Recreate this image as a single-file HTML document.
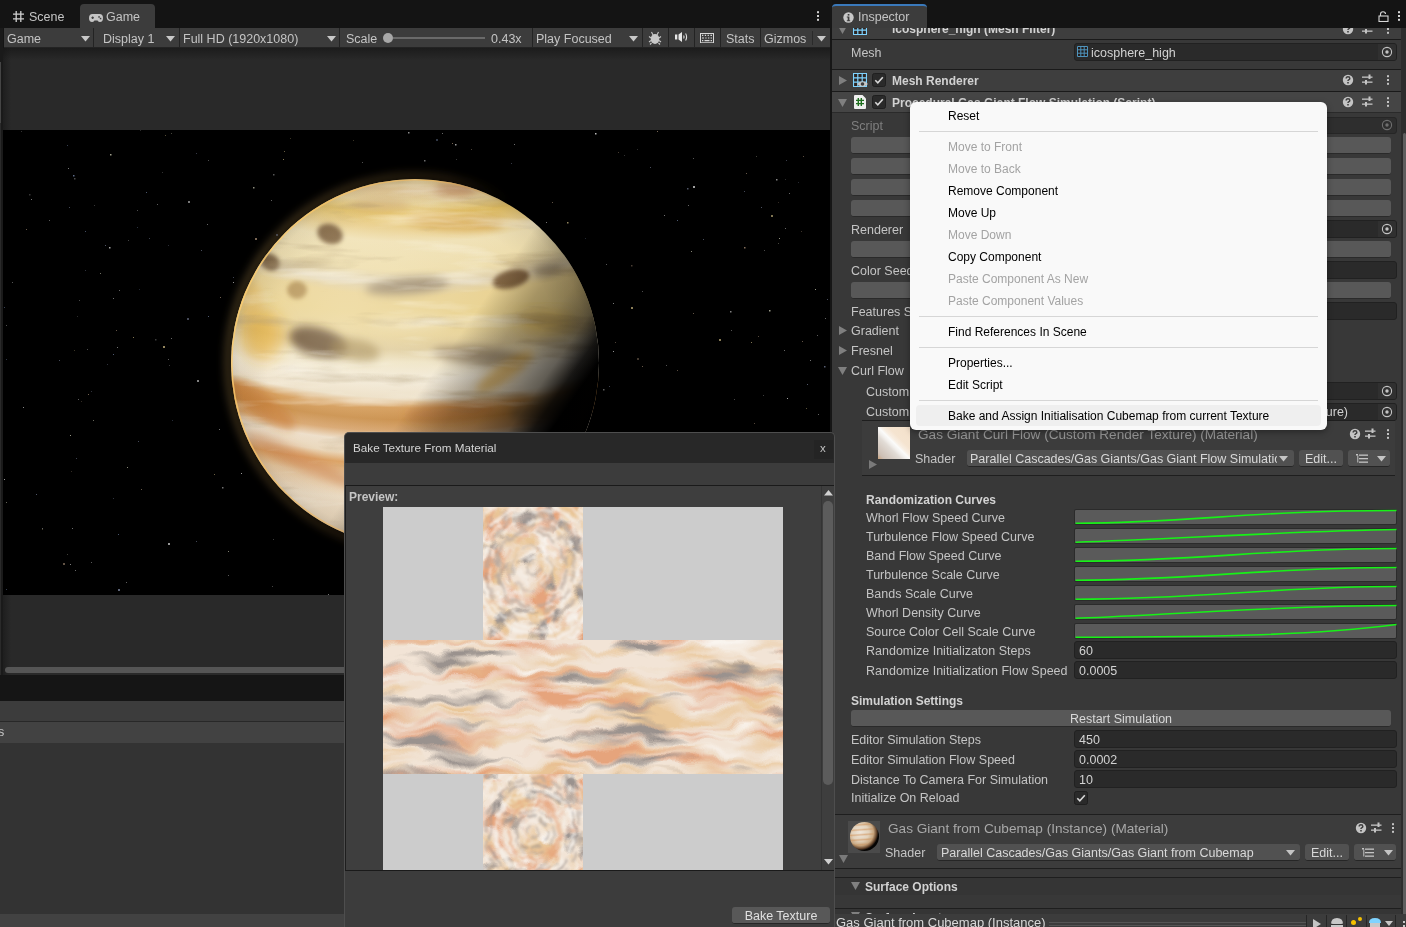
<!DOCTYPE html>
<html><head><meta charset="utf-8">
<style>
*{margin:0;padding:0;box-sizing:border-box}
html,body{width:1406px;height:927px;overflow:hidden;background:#141414}
body{position:relative;font-family:"Liberation Sans",sans-serif;font-size:12.5px;color:#c4c4c4}
.a{position:absolute}
.t{position:absolute;white-space:nowrap;line-height:16px;height:16px}
.b{font-weight:bold}
.sep{position:absolute;width:1px;background:#262626}
.tri-d{position:absolute;width:0;height:0;border-left:4px solid transparent;border-right:4px solid transparent;border-top:5px solid #c4c4c4}
.tri-r{position:absolute;width:0;height:0;border-top:4px solid transparent;border-bottom:4px solid transparent;border-left:6px solid #808080}
.tri-dd{position:absolute;width:0;height:0;border-left:4px solid transparent;border-right:4px solid transparent;border-top:7px solid #808080}
.fld{position:absolute;background:#2a2a2a;border:1px solid #212121;border-radius:3px}
.btn{position:absolute;background:#585858;border-radius:3px;box-shadow:0 1px 0 #242424}
.crv{position:absolute;background:#555555;border:1px solid #2a2a2a;border-radius:2px;overflow:hidden}
.menu{position:absolute;background:#f9f9f9;border-radius:6px;box-shadow:0 2px 6px rgba(0,0,0,.35)}
.mi{position:absolute;left:38px;line-height:16px;white-space:nowrap;font-size:12px;color:#000}
.mi.dis{color:#a3a3a3}
.msep{position:absolute;left:9px;right:9px;height:1px;background:#d6d6d6}
</style></head><body>
<div id="root" style="position:absolute;left:0;top:0;width:1406px;height:927px;overflow:hidden;will-change:transform">

<!-- ===== top tab strip ===== -->
<div class="a" style="left:0;top:0;width:832px;height:28px;background:#141414"></div>
<div class="a" style="left:80px;top:4px;width:75px;height:24px;background:#3c3c3c;border-radius:4px 4px 0 0"></div>
<div class="t" style="left:29px;top:9px;color:#c4c4c4">Scene</div>
<div class="t" style="left:106px;top:9px;color:#c4c4c4">Game</div>

<!-- ===== game toolbar ===== -->
<div class="a" style="left:0;top:28px;width:3px;height:647px;background:#1a1a1a"></div>
<div class="a" style="left:0;top:62px;width:1px;height:61px;background:#454545"></div>
<div class="a" style="left:0;top:123px;width:1px;height:552px;background:#2a2a2a"></div>
<div class="a" style="left:4px;top:28px;width:826px;height:20px;background:#3c3c3c"></div>
<!--GAME-->
<svg class="a" style="left:13px;top:11px" width="11" height="11" viewBox="0 0 11 11"><path d="M3.2 0V11 M7.8 0V11 M0 3.2H11 M0 7.8H11" stroke="#d0d0d0" stroke-width="1.3"/></svg>
<svg class="a" style="left:89px;top:14px" width="14" height="8" viewBox="0 0 14 8"><path d="M3.5 0H10.5Q14 0 14 4Q14 8 11 8Q9.5 8 8.5 6.5H5.5Q4.5 8 3 8Q0 8 0 4Q0 0 3.5 0Z" fill="#c4c4c4"/><path d="M2.3 3.8H5 M3.65 2.5V5.1" stroke="#3c3c3c" stroke-width="1.1"/><rect x="9.3" y="2.2" width="1.5" height="1.5" fill="#3c3c3c"/><rect x="10.8" y="3.8" width="1.5" height="1.5" fill="#3c3c3c"/></svg>
<svg class="a" style="left:816px;top:10px" width="4" height="12" viewBox="0 0 4 12"><rect x="1" y="1.2" width="2" height="2" fill="#d0d0d0"/><rect x="1" y="5" width="2" height="2" fill="#d0d0d0"/><rect x="1" y="8.8" width="2" height="2" fill="#d0d0d0"/></svg>
<div class="a" style="left:93px;top:28px;width:1px;height:20px;background:#232323;"></div>
<div class="a" style="left:179px;top:28px;width:1px;height:20px;background:#232323;"></div>
<div class="a" style="left:339px;top:28px;width:1px;height:20px;background:#232323;"></div>
<div class="a" style="left:532px;top:28px;width:1px;height:20px;background:#232323;"></div>
<div class="a" style="left:642px;top:28px;width:1px;height:20px;background:#232323;"></div>
<div class="a" style="left:668px;top:28px;width:1px;height:20px;background:#232323;"></div>
<div class="a" style="left:694px;top:28px;width:1px;height:20px;background:#232323;"></div>
<div class="a" style="left:720px;top:28px;width:1px;height:20px;background:#232323;"></div>
<div class="a" style="left:760px;top:28px;width:1px;height:20px;background:#232323;"></div>
<div class="a" style="left:812px;top:31px;width:1px;height:14px;background:#2a2a2a;"></div>
<div class="a" style="left:4px;top:47px;width:826px;height:1px;background:#232323;"></div>
<div class="t" style="left:7px;top:31px;color:#c4c4c4;">Game</div>
<svg class="a" style="left:81px;top:36px" width="9" height="6" viewBox="0 0 9 6"><path d="M0 0 L9 0 L4.5 5.5Z" fill="#c8c8c8"/></svg>
<div class="t" style="left:103px;top:31px;color:#c4c4c4;">Display 1</div>
<svg class="a" style="left:166px;top:36px" width="9" height="6" viewBox="0 0 9 6"><path d="M0 0 L9 0 L4.5 5.5Z" fill="#c8c8c8"/></svg>
<div class="t" style="left:183px;top:31px;color:#c4c4c4;">Full HD (1920x1080)</div>
<svg class="a" style="left:327px;top:36px" width="9" height="6" viewBox="0 0 9 6"><path d="M0 0 L9 0 L4.5 5.5Z" fill="#c8c8c8"/></svg>
<div class="t" style="left:346px;top:31px;color:#c4c4c4;">Scale</div>
<div class="a" style="left:393px;top:37px;width:92px;height:1.5px;background:#6a6a6a;"></div>
<div class="a" style="left:383px;top:33px;width:10px;height:10px;border-radius:50%;background:#a8a8a8"></div>
<div class="t" style="left:491px;top:31px;color:#c4c4c4;">0.43x</div>
<div class="t" style="left:536px;top:31px;color:#c4c4c4;">Play Focused</div>
<svg class="a" style="left:629px;top:36px" width="9" height="6" viewBox="0 0 9 6"><path d="M0 0 L9 0 L4.5 5.5Z" fill="#c8c8c8"/></svg>
<svg class="a" style="left:648px;top:31px" width="14" height="14" viewBox="0 0 14 14"><ellipse cx="7" cy="8" rx="4.3" ry="5" fill="#c8c8c8"/><path d="M3.5 1L5 4 M10.5 1L9 4 M1 5.5L3 7 M13 5.5L11 7 M1 11L3 9.5 M13 11L11 9.5 M2 13.5L3.5 12 M12 13.5L10.5 12" stroke="#c8c8c8" stroke-width="1.1"/></svg>
<svg class="a" style="left:675px;top:32px" width="13" height="10" viewBox="0 0 13 10"><rect x="0" y="2.5" width="2.3" height="5" fill="#e8e8e8"/><path d="M3.5 2.5L7 0V10L3.5 7.5Z" fill="#e8e8e8"/><path d="M8.6 3.5Q9.6 5 8.6 6.5" stroke="#e0e0e0" stroke-width="1.1" fill="none"/><path d="M10.6 1.5Q12.6 5 10.6 8.5" stroke="#e0e0e0" stroke-width="1.1" fill="none"/></svg>
<svg class="a" style="left:700px;top:33px" width="14" height="10" viewBox="0 0 14 10"><rect x="0.5" y="0.5" width="13" height="9.3" fill="none" stroke="#d8d8d8" stroke-width="1"/><path d="M2 2.3h1.3M4.8 2.3h1.3M7.6 2.3h1.3M10.4 2.3h1.6M2 5h2M5.3 5h1.3M8 5h1.3M10.6 5h1.4M2 7.6h1.3M4.5 7.6h5M10.6 7.6h1.4" stroke="#d8d8d8" stroke-width="1.2"/></svg>
<div class="t" style="left:726px;top:31px;color:#c4c4c4;">Stats</div>
<div class="t" style="left:764px;top:31px;color:#c4c4c4;">Gizmos</div>
<svg class="a" style="left:817px;top:36px" width="9" height="6" viewBox="0 0 9 6"><path d="M0 0 L9 0 L4.5 5.5Z" fill="#c8c8c8"/></svg>
<!--/GAME-->

<!-- ===== game view ===== -->
<div class="a" style="left:3px;top:48px;width:827px;height:627px;background:#292929"></div>
<div class="a" style="left:3px;top:48px;width:827px;height:12px;background:linear-gradient(#1c1c1c,rgba(40,40,40,0))"></div>
<div class="a" style="left:3px;top:48px;width:8px;height:627px;background:linear-gradient(90deg,rgba(20,20,20,.5),rgba(40,40,40,0))"></div>
<div class="a" style="left:3px;top:130px;width:827px;height:465px;background:#000;overflow:hidden" id="sky">
<!--PLANET-->
<svg class="a" style="left:0;top:0" width="827" height="465" viewBox="0 0 827 465">
<defs>
<clipPath id="pc"><circle cx="412" cy="233" r="184"/></clipPath>
<filter id="bl4" x="-50%" y="-50%" width="200%" height="200%"><feGaussianBlur stdDeviation="4"/></filter>
<filter id="bl8" x="-50%" y="-50%" width="200%" height="200%"><feGaussianBlur stdDeviation="8"/></filter>
<filter id="bl2" x="-50%" y="-50%" width="200%" height="200%"><feGaussianBlur stdDeviation="2"/></filter>
<filter id="glow" x="-20%" y="-20%" width="140%" height="140%"><feGaussianBlur stdDeviation="3"/></filter>
<radialGradient id="bands" gradientUnits="userSpaceOnUse" cx="411" cy="-431" r="900">
<stop offset="0" stop-color="#e6d2a4"/>
<stop offset="0.5344" stop-color="#e4cc90"/>
<stop offset="0.5456" stop-color="#e2c490"/>
<stop offset="0.5589" stop-color="#ead49c"/>
<stop offset="0.5722" stop-color="#e6c264"/>
<stop offset="0.5878" stop-color="#e8cc88"/>
<stop offset="0.6033" stop-color="#efe0b4"/>
<stop offset="0.6344" stop-color="#eddcaa"/>
<stop offset="0.6500" stop-color="#dccdac"/>
<stop offset="0.6633" stop-color="#e8d090"/>
<stop offset="0.6844" stop-color="#e8d08c"/>
<stop offset="0.7067" stop-color="#e6d094"/>
<stop offset="0.7233" stop-color="#dcc898"/>
<stop offset="0.7367" stop-color="#ede2c4"/>
<stop offset="0.7567" stop-color="#f2eadb"/>
<stop offset="0.7767" stop-color="#eadcc4"/>
<stop offset="0.7878" stop-color="#d0924c"/>
<stop offset="0.8011" stop-color="#c4843c"/>
<stop offset="0.8144" stop-color="#d49e66"/>
<stop offset="0.8256" stop-color="#ecdcc8"/>
<stop offset="0.8400" stop-color="#e8d4b8"/>
<stop offset="0.8511" stop-color="#d99c5c"/>
<stop offset="0.8656" stop-color="#e4c49c"/>
<stop offset="0.8900" stop-color="#ecdcc4"/>
<stop offset="0.9567" stop-color="#e6d0b0"/>
</radialGradient>
<radialGradient id="shade" gradientUnits="userSpaceOnUse" cx="412" cy="233" r="184"><stop offset="0" stop-color="#000" stop-opacity="0"/><stop offset="0.8" stop-color="#000" stop-opacity="0"/><stop offset="0.95" stop-color="#100800" stop-opacity="0.06"/><stop offset="1" stop-color="#000" stop-opacity="0.12"/></radialGradient>
<linearGradient id="shadeE" gradientUnits="userSpaceOnUse" x1="412" y1="233" x2="543" y2="324.8"><stop offset="0" stop-color="#000" stop-opacity="0"/><stop offset="0.125" stop-color="#000" stop-opacity="0"/><stop offset="0.375" stop-color="#0a0600" stop-opacity="0.3"/><stop offset="0.531" stop-color="#0a0600" stop-opacity="0.4"/><stop offset="0.719" stop-color="#050300" stop-opacity="0.6"/><stop offset="0.844" stop-color="#000" stop-opacity="0.9"/><stop offset="0.9375" stop-color="#000" stop-opacity="1"/></linearGradient>
<radialGradient id="hl" gradientUnits="userSpaceOnUse" cx="342" cy="193" r="184"><stop offset="0" stop-color="#fff8e0" stop-opacity="0.35"/><stop offset="1" stop-color="#fff8e0" stop-opacity="0"/></radialGradient>
<linearGradient id="rimg" gradientUnits="userSpaceOnUse" x1="228" y1="177.8" x2="596" y2="288.2"><stop offset="0" stop-color="#ffcf70" stop-opacity="0.85"/><stop offset="0.45" stop-color="#f0b050" stop-opacity="0.5"/><stop offset="0.62" stop-color="#a07030" stop-opacity="0"/></linearGradient>
<filter id="ptex" x="0" y="0" width="1" height="1"><feTurbulence type="fractalNoise" baseFrequency="0.008 0.05" numOctaves="4" seed="3" result="n"/><feColorMatrix in="n" type="matrix" values="0 0 0 0 0.35  0 0 0 0 0.25  0 0 0 0 0.12  3 0 0 0 -1.75" result="dk"/><feColorMatrix in="n" type="matrix" values="0 0 0 0 1  0 0 0 0 0.97  0 0 0 0 0.9  0 -3 0 0 1.25" result="lt"/><feMerge><feMergeNode in="dk"/><feMergeNode in="lt"/></feMerge></filter>
</defs>
<circle cx="412" cy="233" r="187" fill="none" stroke="url(#rimg)" stroke-width="6" stroke-opacity="0.35" filter="url(#bl4)"/>
<g clip-path="url(#pc)">
<rect x="228" y="49" width="368" height="368" fill="url(#bands)"/>
<ellipse cx="327" cy="104" rx="13" ry="10" fill="#6a4a2a" fill-opacity="0.9" filter="url(#bl2)" transform="rotate(20 327 104)"/>
<ellipse cx="267" cy="132" rx="10" ry="8" fill="#5f4224" fill-opacity="0.9" filter="url(#bl2)" transform="rotate(30 267 132)"/>
<ellipse cx="294" cy="160" rx="10" ry="9" fill="#9a7030" fill-opacity="0.75" filter="url(#bl2)" transform="rotate(0 294 160)"/>
<ellipse cx="404" cy="156" rx="42" ry="8" fill="#7c6a52" fill-opacity="0.7" filter="url(#bl4)" transform="rotate(-5 404 156)"/>
<ellipse cx="508" cy="149" rx="19" ry="9" fill="#6a4a2a" fill-opacity="0.85" filter="url(#bl2)" transform="rotate(-15 508 149)"/>
<ellipse cx="545" cy="140" rx="16" ry="6" fill="#7a6a52" fill-opacity="0.6" filter="url(#bl4)" transform="rotate(-10 545 140)"/>
<ellipse cx="315" cy="212" rx="30" ry="14" fill="#4e3018" fill-opacity="0.9" filter="url(#bl4)" transform="rotate(15 315 212)"/>
<ellipse cx="259" cy="205" rx="22" ry="26" fill="#e0a020" fill-opacity="0.7" filter="url(#bl8)" transform="rotate(0 259 205)"/>
<ellipse cx="352" cy="220" rx="25" ry="11" fill="#907030" fill-opacity="0.6" filter="url(#bl4)" transform="rotate(10 352 220)"/>
<ellipse cx="477" cy="226" rx="48" ry="9" fill="#7a6448" fill-opacity="0.65" filter="url(#bl4)" transform="rotate(5 477 226)"/>
<ellipse cx="545" cy="192" rx="30" ry="10" fill="#d8a830" fill-opacity="0.55" filter="url(#bl8)" transform="rotate(0 545 192)"/>
<ellipse cx="452" cy="92" rx="48" ry="8" fill="#d09838" fill-opacity="0.7" filter="url(#bl4)" transform="rotate(3 452 92)"/>
<ellipse cx="452" cy="60" rx="22" ry="7" fill="#b8805a" fill-opacity="0.6" filter="url(#bl4)" transform="rotate(0 452 60)"/>
<ellipse cx="377" cy="75" rx="30" ry="6" fill="#c89860" fill-opacity="0.45" filter="url(#bl4)" transform="rotate(0 377 75)"/>
<ellipse cx="537" cy="248" rx="20" ry="20" fill="#e8e2d2" fill-opacity="0.6" filter="url(#bl4)" transform="rotate(0 537 248)"/>
<ellipse cx="502" cy="242" rx="35" ry="9" fill="#d8a030" fill-opacity="0.6" filter="url(#bl4)" transform="rotate(-35 502 242)"/>
<ellipse cx="259" cy="275" rx="40" ry="12" fill="#c06a20" fill-opacity="0.6" filter="url(#bl4)" transform="rotate(35 259 275)"/>
<ellipse cx="297" cy="330" rx="60" ry="9" fill="#c87840" fill-opacity="0.5" filter="url(#bl4)" transform="rotate(25 297 330)"/>
<ellipse cx="407" cy="192" rx="40" ry="8" fill="#f4ecd8" fill-opacity="0.35" filter="url(#bl4)" transform="rotate(0 407 192)"/>
<ellipse cx="447" cy="282" rx="45" ry="9" fill="#b86a28" fill-opacity="0.5" filter="url(#bl4)" transform="rotate(-5 447 282)"/>
<ellipse cx="537" cy="280" rx="30" ry="10" fill="#6a5a40" fill-opacity="0.5" filter="url(#bl4)" transform="rotate(-10 537 280)"/>
<ellipse cx="247" cy="170" rx="12" ry="20" fill="#e8b040" fill-opacity="0.5" filter="url(#bl4)" transform="rotate(0 247 170)"/>
<rect x="228" y="49" width="368" height="368" fill="#000" filter="url(#ptex)" opacity="0.55"/>
<rect x="228" y="49" width="368" height="368" fill="url(#hl)"/>
<rect x="228" y="49" width="368" height="368" fill="url(#shadeE)"/>
<rect x="228" y="49" width="368" height="368" fill="url(#shade)"/>
<circle cx="412" cy="233" r="183.5" fill="none" stroke="url(#rimg)" stroke-width="2.2"/>
</g>
<rect x="268" y="70" width="1" height="1" fill="#8a8a8a" fill-opacity="0.67"/>
<rect x="78" y="271" width="1" height="1" fill="#a08870" fill-opacity="0.32"/>
<rect x="359" y="32" width="1" height="1" fill="#a0a0a0" fill-opacity="0.49"/>
<rect x="684" y="58" width="1.5" height="1.5" fill="#707890" fill-opacity="0.70"/>
<rect x="784" y="268" width="1" height="1" fill="#d8d8d8" fill-opacity="0.74"/>
<rect x="39" y="399" width="1" height="1" fill="#b0a070" fill-opacity="0.36"/>
<rect x="97" y="143" width="1" height="1" fill="#c8c8b0" fill-opacity="0.56"/>
<rect x="453" y="29" width="1" height="1" fill="#8a8a8a" fill-opacity="0.39"/>
<rect x="657" y="325" width="1" height="1" fill="#707890" fill-opacity="0.56"/>
<rect x="603" y="134" width="1" height="1" fill="#a0a0a0" fill-opacity="0.53"/>
<rect x="136" y="159" width="1" height="1" fill="#6a7a9a" fill-opacity="0.32"/>
<rect x="781" y="220" width="1" height="1" fill="#a0a0a0" fill-opacity="0.63"/>
<rect x="593" y="412" width="1" height="1" fill="#909090" fill-opacity="0.72"/>
<rect x="238" y="343" width="1" height="1" fill="#d8d8d8" fill-opacity="0.71"/>
<rect x="113" y="200" width="1" height="1" fill="#a08870" fill-opacity="0.62"/>
<rect x="816" y="317" width="1" height="1" fill="#d8d8d8" fill-opacity="0.37"/>
<rect x="146" y="108" width="1" height="1" fill="#707890" fill-opacity="0.52"/>
<rect x="3" y="195" width="1" height="1" fill="#909090" fill-opacity="0.55"/>
<rect x="788" y="321" width="1" height="1" fill="#a08870" fill-opacity="0.59"/>
<rect x="612" y="212" width="1" height="1" fill="#a08870" fill-opacity="0.48"/>
<rect x="814" y="205" width="1" height="1" fill="#a0a0a0" fill-opacity="0.57"/>
<rect x="85" y="264" width="1" height="1" fill="#a08870" fill-opacity="0.73"/>
<rect x="508" y="33" width="1" height="1" fill="#707890" fill-opacity="0.47"/>
<rect x="525" y="444" width="1" height="1" fill="#909090" fill-opacity="0.36"/>
<rect x="702" y="462" width="1" height="1" fill="#6a7a9a" fill-opacity="0.52"/>
<rect x="71" y="48" width="1.5" height="1.5" fill="#909090" fill-opacity="0.50"/>
<rect x="685" y="75" width="1" height="1" fill="#8a8a8a" fill-opacity="0.73"/>
<rect x="449" y="13" width="1" height="1" fill="#a08870" fill-opacity="0.74"/>
<rect x="714" y="324" width="1" height="1" fill="#b0a070" fill-opacity="0.47"/>
<rect x="138" y="359" width="1" height="1" fill="#a08870" fill-opacity="0.65"/>
<rect x="273" y="104" width="2" height="2" fill="#707890" fill-opacity="0.48"/>
<rect x="165" y="229" width="1" height="1" fill="#8a8a8a" fill-opacity="0.66"/>
<rect x="669" y="336" width="1" height="1" fill="#909090" fill-opacity="0.34"/>
<rect x="84" y="219" width="1" height="1" fill="#909090" fill-opacity="0.52"/>
<rect x="815" y="284" width="1" height="1" fill="#8a8a8a" fill-opacity="0.71"/>
<rect x="690" y="56" width="2" height="2" fill="#d8d8d8" fill-opacity="0.74"/>
<rect x="165" y="413" width="2" height="2" fill="#d8d8d8" fill-opacity="0.70"/>
<rect x="72" y="440" width="1" height="1" fill="#d8d8d8" fill-opacity="0.48"/>
<rect x="783" y="337" width="1" height="1" fill="#c8c8b0" fill-opacity="0.31"/>
<rect x="775" y="72" width="1" height="1" fill="#a08870" fill-opacity="0.31"/>
<rect x="661" y="338" width="1" height="1" fill="#a0a0a0" fill-opacity="0.64"/>
<rect x="115" y="459" width="2" height="2" fill="#707890" fill-opacity="0.83"/>
<rect x="23" y="99" width="1" height="1" fill="#a08870" fill-opacity="0.64"/>
<rect x="690" y="28" width="1" height="1" fill="#909090" fill-opacity="0.60"/>
<rect x="674" y="240" width="1" height="1" fill="#a08870" fill-opacity="0.54"/>
<rect x="433" y="9" width="2" height="2" fill="#6a7a9a" fill-opacity="0.45"/>
<rect x="3" y="372" width="1" height="1" fill="#c8c8b0" fill-opacity="0.51"/>
<rect x="600" y="259" width="1.5" height="1.5" fill="#909090" fill-opacity="0.64"/>
<rect x="88" y="261" width="1" height="1" fill="#707890" fill-opacity="0.42"/>
<rect x="639" y="236" width="1" height="1" fill="#a08870" fill-opacity="0.64"/>
<rect x="755" y="206" width="1" height="1" fill="#a08870" fill-opacity="0.53"/>
<rect x="779" y="325" width="1" height="1" fill="#b0a070" fill-opacity="0.70"/>
<rect x="168" y="208" width="1" height="1" fill="#d8d8d8" fill-opacity="0.48"/>
<rect x="250" y="57" width="1.5" height="1.5" fill="#c8c8b0" fill-opacity="0.70"/>
<rect x="114" y="217" width="1" height="1" fill="#a0a0a0" fill-opacity="0.70"/>
<rect x="135" y="311" width="1" height="1" fill="#707890" fill-opacity="0.62"/>
<rect x="822" y="188" width="1" height="1" fill="#d8d8d8" fill-opacity="0.46"/>
<rect x="76" y="170" width="1" height="1" fill="#909090" fill-opacity="0.51"/>
<rect x="795" y="52" width="1" height="1" fill="#707890" fill-opacity="0.34"/>
<rect x="225" y="421" width="1" height="1" fill="#c8c8b0" fill-opacity="0.64"/>
<rect x="678" y="395" width="1" height="1" fill="#b0a070" fill-opacity="0.37"/>
<rect x="760" y="265" width="1" height="1" fill="#909090" fill-opacity="0.43"/>
<rect x="661" y="85" width="1" height="1" fill="#a0a0a0" fill-opacity="0.72"/>
<rect x="69" y="398" width="1" height="1" fill="#a0a0a0" fill-opacity="0.69"/>
<rect x="457" y="431" width="1" height="1" fill="#b0a070" fill-opacity="0.36"/>
<rect x="91" y="75" width="1" height="1" fill="#8a8a8a" fill-opacity="0.39"/>
<rect x="628" y="135" width="1.5" height="1.5" fill="#a08870" fill-opacity="0.45"/>
<rect x="287" y="8" width="1" height="1" fill="#b0a070" fill-opacity="0.31"/>
<rect x="606" y="256" width="1" height="1" fill="#707890" fill-opacity="0.51"/>
<rect x="773" y="49" width="1.5" height="1.5" fill="#d8d8d8" fill-opacity="0.62"/>
<rect x="690" y="183" width="1" height="1" fill="#a08870" fill-opacity="0.61"/>
<rect x="812" y="159" width="1" height="1" fill="#c8c8b0" fill-opacity="0.75"/>
<rect x="812" y="389" width="1" height="1" fill="#8a8a8a" fill-opacity="0.58"/>
<rect x="728" y="200" width="1" height="1" fill="#8a8a8a" fill-opacity="0.60"/>
<rect x="803" y="278" width="1" height="1" fill="#b0a070" fill-opacity="0.51"/>
<rect x="130" y="207" width="1" height="1" fill="#b0a070" fill-opacity="0.73"/>
<rect x="804" y="254" width="1" height="1" fill="#707890" fill-opacity="0.73"/>
<rect x="1" y="177" width="1" height="1" fill="#6a7a9a" fill-opacity="0.53"/>
<rect x="166" y="235" width="1" height="1" fill="#8a8a8a" fill-opacity="0.42"/>
<rect x="74" y="186" width="1" height="1" fill="#8a8a8a" fill-opacity="0.31"/>
<rect x="252" y="108" width="2" height="2" fill="#a08870" fill-opacity="0.76"/>
<rect x="727" y="181" width="1.5" height="1.5" fill="#909090" fill-opacity="0.89"/>
<rect x="124" y="337" width="1" height="1" fill="#c8c8b0" fill-opacity="0.67"/>
<rect x="418" y="423" width="1" height="1" fill="#a08870" fill-opacity="0.68"/>
<rect x="665" y="384" width="1" height="1" fill="#707890" fill-opacity="0.31"/>
<rect x="110" y="168" width="1" height="1" fill="#a0a0a0" fill-opacity="0.68"/>
<rect x="405" y="2" width="1.5" height="1.5" fill="#a0a0a0" fill-opacity="0.86"/>
<rect x="743" y="43" width="1" height="1" fill="#a08870" fill-opacity="0.64"/>
<rect x="700" y="109" width="1" height="1" fill="#707890" fill-opacity="0.63"/>
<rect x="807" y="230" width="1" height="1" fill="#d8d8d8" fill-opacity="0.52"/>
<rect x="565" y="357" width="1" height="1" fill="#707890" fill-opacity="0.57"/>
<rect x="110" y="224" width="1" height="1" fill="#6a7a9a" fill-opacity="0.74"/>
<rect x="82" y="101" width="1" height="1" fill="#6a7a9a" fill-opacity="0.62"/>
<rect x="634" y="462" width="1" height="1" fill="#a08870" fill-opacity="0.44"/>
<rect x="71" y="220" width="1" height="1" fill="#b0a070" fill-opacity="0.33"/>
<rect x="419" y="462" width="1" height="1" fill="#b0a070" fill-opacity="0.39"/>
<rect x="782" y="98" width="1" height="1" fill="#a0a0a0" fill-opacity="0.64"/>
<rect x="217" y="167" width="1" height="1" fill="#a08870" fill-opacity="0.70"/>
<rect x="582" y="108" width="1" height="1" fill="#6a7a9a" fill-opacity="0.31"/>
<rect x="3" y="229" width="1" height="1" fill="#6a7a9a" fill-opacity="0.44"/>
<rect x="116" y="160" width="1" height="1" fill="#909090" fill-opacity="0.68"/>
<rect x="1" y="349" width="1" height="1" fill="#d8d8d8" fill-opacity="0.72"/>
<rect x="162" y="5" width="1" height="1" fill="#b0a070" fill-opacity="0.47"/>
<rect x="325" y="464" width="1" height="1" fill="#a0a0a0" fill-opacity="0.72"/>
<rect x="625" y="397" width="1" height="1" fill="#b0a070" fill-opacity="0.32"/>
<rect x="123" y="452" width="1" height="1" fill="#d8d8d8" fill-opacity="0.44"/>
<rect x="639" y="365" width="1" height="1" fill="#d8d8d8" fill-opacity="0.67"/>
<rect x="522" y="425" width="1" height="1" fill="#a08870" fill-opacity="0.39"/>
<rect x="67" y="434" width="1" height="1" fill="#d8d8d8" fill-opacity="0.58"/>
<rect x="115" y="404" width="1" height="1" fill="#6a7a9a" fill-opacity="0.71"/>
<rect x="211" y="344" width="1" height="1" fill="#b0a070" fill-opacity="0.60"/>
<rect x="134" y="97" width="1" height="1" fill="#6a7a9a" fill-opacity="0.40"/>
<rect x="749" y="463" width="1" height="1" fill="#6a7a9a" fill-opacity="0.36"/>
<rect x="159" y="42" width="1" height="1" fill="#909090" fill-opacity="0.34"/>
<rect x="198" y="120" width="1" height="1" fill="#707890" fill-opacity="0.64"/>
<rect x="280" y="29" width="1" height="1" fill="#b0a070" fill-opacity="0.74"/>
<rect x="104" y="234" width="1" height="1" fill="#707890" fill-opacity="0.42"/>
<rect x="205" y="186" width="1" height="1" fill="#6a7a9a" fill-opacity="0.73"/>
<rect x="702" y="406" width="1" height="1" fill="#8a8a8a" fill-opacity="0.31"/>
<rect x="587" y="416" width="1" height="1" fill="#6a7a9a" fill-opacity="0.52"/>
<rect x="60" y="433" width="2" height="2" fill="#a08870" fill-opacity="0.61"/>
<rect x="185" y="71" width="2" height="2" fill="#a0a0a0" fill-opacity="0.75"/>
<rect x="33" y="364" width="1" height="1" fill="#707890" fill-opacity="0.71"/>
<rect x="106" y="117" width="1.5" height="1.5" fill="#d8d8d8" fill-opacity="0.77"/>
<rect x="82" y="140" width="1" height="1" fill="#707890" fill-opacity="0.42"/>
<rect x="654" y="1" width="1" height="1" fill="#a08870" fill-opacity="0.75"/>
<rect x="230" y="147" width="1" height="1" fill="#707890" fill-opacity="0.54"/>
<rect x="452" y="14" width="1.5" height="1.5" fill="#d8d8d8" fill-opacity="0.71"/>
<rect x="46" y="90" width="1" height="1" fill="#d8d8d8" fill-opacity="0.42"/>
<rect x="552" y="430" width="1" height="1" fill="#707890" fill-opacity="0.32"/>
<rect x="564" y="92" width="1.5" height="1.5" fill="#b0a070" fill-opacity="0.81"/>
<rect x="56" y="230" width="1" height="1" fill="#707890" fill-opacity="0.64"/>
<rect x="160" y="216" width="2" height="2" fill="#b0a070" fill-opacity="0.84"/>
<rect x="90" y="290" width="1" height="1" fill="#c8c8b0" fill-opacity="0.52"/>
<rect x="753" y="26" width="1" height="1" fill="#c8c8b0" fill-opacity="0.32"/>
<rect x="20" y="277" width="1" height="1" fill="#d8d8d8" fill-opacity="0.62"/>
<rect x="152" y="209" width="1.5" height="1.5" fill="#909090" fill-opacity="0.41"/>
<rect x="66" y="77" width="1" height="1" fill="#707890" fill-opacity="0.59"/>
<rect x="694" y="458" width="1" height="1" fill="#6a7a9a" fill-opacity="0.35"/>
<rect x="65" y="38" width="1" height="1" fill="#d8d8d8" fill-opacity="0.55"/>
<rect x="628" y="177" width="2" height="2" fill="#b0a070" fill-opacity="0.79"/>
<rect x="73" y="328" width="1" height="1" fill="#707890" fill-opacity="0.54"/>
<rect x="610" y="221" width="1" height="1" fill="#d8d8d8" fill-opacity="0.67"/>
<rect x="634" y="19" width="1" height="1" fill="#8a8a8a" fill-opacity="0.33"/>
<rect x="761" y="120" width="1" height="1" fill="#a0a0a0" fill-opacity="0.45"/>
<rect x="225" y="445" width="1" height="1" fill="#8a8a8a" fill-opacity="0.64"/>
<rect x="570" y="430" width="1" height="1" fill="#b0a070" fill-opacity="0.62"/>
<rect x="783" y="30" width="1" height="1" fill="#707890" fill-opacity="0.51"/>
<rect x="791" y="444" width="2" height="2" fill="#d8d8d8" fill-opacity="0.49"/>
<rect x="768" y="85" width="2" height="2" fill="#b0a070" fill-opacity="0.73"/>
<rect x="125" y="110" width="1" height="1" fill="#909090" fill-opacity="0.46"/>
<rect x="647" y="37" width="1" height="1" fill="#707890" fill-opacity="0.64"/>
<rect x="205" y="30" width="1" height="1" fill="#8a8a8a" fill-opacity="0.55"/>
<rect x="269" y="456" width="1" height="1" fill="#a0a0a0" fill-opacity="0.42"/>
<rect x="70" y="45" width="1.5" height="1.5" fill="#6a7a9a" fill-opacity="0.88"/>
<rect x="143" y="62" width="1" height="1" fill="#6a7a9a" fill-opacity="0.70"/>
<rect x="194" y="250" width="2" height="2" fill="#a0a0a0" fill-opacity="0.81"/>
<rect x="165" y="115" width="1" height="1" fill="#707890" fill-opacity="0.37"/>
<rect x="731" y="269" width="1" height="1" fill="#909090" fill-opacity="0.48"/>
<rect x="821" y="236" width="1.5" height="1.5" fill="#707890" fill-opacity="0.79"/>
<rect x="540" y="461" width="1" height="1" fill="#a0a0a0" fill-opacity="0.51"/>
<rect x="677" y="391" width="1" height="1" fill="#909090" fill-opacity="0.69"/>
<rect x="193" y="23" width="1" height="1" fill="#707890" fill-opacity="0.47"/>
<rect x="716" y="209" width="2" height="2" fill="#b0a070" fill-opacity="0.78"/>
<rect x="782" y="49" width="1" height="1" fill="#909090" fill-opacity="0.32"/>
<rect x="281" y="21" width="1" height="1" fill="#b0a070" fill-opacity="0.57"/>
<rect x="9" y="152" width="1" height="1" fill="#909090" fill-opacity="0.58"/>
<rect x="64" y="15" width="1" height="1" fill="#6a7a9a" fill-opacity="0.52"/>
<rect x="549" y="72" width="1" height="1" fill="#a08870" fill-opacity="0.59"/>
<rect x="817" y="311" width="1" height="1" fill="#d8d8d8" fill-opacity="0.44"/>
<rect x="824" y="169" width="1" height="1" fill="#707890" fill-opacity="0.63"/>
<rect x="168" y="3" width="1" height="1" fill="#c8c8b0" fill-opacity="0.35"/>
<rect x="75" y="269" width="1" height="1" fill="#909090" fill-opacity="0.65"/>
<rect x="107" y="24" width="1.5" height="1.5" fill="#c8c8b0" fill-opacity="0.79"/>
<rect x="767" y="343" width="1" height="1" fill="#c8c8b0" fill-opacity="0.46"/>
<rect x="134" y="80" width="1" height="1" fill="#a0a0a0" fill-opacity="0.47"/>
<rect x="623" y="368" width="1" height="1" fill="#707890" fill-opacity="0.36"/>
<rect x="780" y="454" width="1" height="1" fill="#6a7a9a" fill-opacity="0.32"/>
<rect x="766" y="180" width="1.5" height="1.5" fill="#c8c8b0" fill-opacity="0.78"/>
<rect x="184" y="188" width="2" height="2" fill="#707890" fill-opacity="0.61"/>
<rect x="468" y="19" width="1" height="1" fill="#a08870" fill-opacity="0.47"/>
<rect x="102" y="115" width="1" height="1" fill="#707890" fill-opacity="0.70"/>
<rect x="697" y="313" width="1" height="1" fill="#909090" fill-opacity="0.48"/>
<rect x="643" y="302" width="1" height="1" fill="#b0a070" fill-opacity="0.41"/>
<rect x="3" y="459" width="1" height="1" fill="#6a7a9a" fill-opacity="0.50"/>
<rect x="692" y="377" width="1" height="1" fill="#d8d8d8" fill-opacity="0.33"/>
<rect x="663" y="235" width="1" height="1" fill="#8a8a8a" fill-opacity="0.59"/>
<rect x="68" y="341" width="1" height="1" fill="#a08870" fill-opacity="0.32"/>
<rect x="786" y="63" width="1" height="1" fill="#a0a0a0" fill-opacity="0.63"/>
<rect x="674" y="90" width="1" height="1" fill="#6a7a9a" fill-opacity="0.73"/>
<rect x="758" y="77" width="1" height="1" fill="#707890" fill-opacity="0.67"/>
<rect x="748" y="212" width="1" height="1" fill="#b0a070" fill-opacity="0.73"/>
<rect x="230" y="152" width="1" height="1" fill="#d8d8d8" fill-opacity="0.66"/>
<rect x="219" y="357" width="1.5" height="1.5" fill="#8a8a8a" fill-opacity="0.82"/>
<rect x="799" y="211" width="1" height="1" fill="#a08870" fill-opacity="0.61"/>
<rect x="741" y="117" width="1.5" height="1.5" fill="#a08870" fill-opacity="0.82"/>
<rect x="610" y="173" width="1" height="1" fill="#d8d8d8" fill-opacity="0.56"/>
<rect x="615" y="22" width="1" height="1" fill="#a08870" fill-opacity="0.44"/>
<rect x="799" y="405" width="1.5" height="1.5" fill="#909090" fill-opacity="0.35"/>
<rect x="28" y="69" width="1" height="1" fill="#d8d8d8" fill-opacity="0.53"/>
<rect x="741" y="61" width="1" height="1" fill="#707890" fill-opacity="0.59"/>
<rect x="18" y="1" width="1" height="1" fill="#909090" fill-opacity="0.35"/>
<rect x="169" y="290" width="1" height="1" fill="#6a7a9a" fill-opacity="0.36"/>
<rect x="775" y="113" width="1" height="1" fill="#c8c8b0" fill-opacity="0.34"/>
<rect x="528" y="405" width="1" height="1" fill="#b0a070" fill-opacity="0.67"/>
<rect x="800" y="26" width="1" height="1" fill="#a08870" fill-opacity="0.57"/>
<rect x="137" y="0" width="1" height="1" fill="#8a8a8a" fill-opacity="0.31"/>
<rect x="154" y="74" width="1" height="1" fill="#a0a0a0" fill-opacity="0.58"/>
<rect x="543" y="92" width="1" height="1" fill="#d8d8d8" fill-opacity="0.53"/>
<rect x="421" y="30" width="1.5" height="1.5" fill="#8a8a8a" fill-opacity="0.78"/>
<rect x="592" y="3" width="1.5" height="1.5" fill="#d8d8d8" fill-opacity="0.85"/>
<rect x="67" y="305" width="1" height="1" fill="#c8c8b0" fill-opacity="0.75"/>
<rect x="216" y="299" width="1" height="1" fill="#a0a0a0" fill-opacity="0.70"/>
<rect x="765" y="438" width="1.5" height="1.5" fill="#b0a070" fill-opacity="0.38"/>
<rect x="567" y="427" width="1" height="1" fill="#b0a070" fill-opacity="0.59"/>
<rect x="798" y="101" width="1" height="1" fill="#a08870" fill-opacity="0.38"/>
<rect x="748" y="391" width="1" height="1" fill="#707890" fill-opacity="0.64"/>
<rect x="270" y="409" width="1" height="1" fill="#909090" fill-opacity="0.41"/>
<rect x="751" y="293" width="1" height="1" fill="#a08870" fill-opacity="0.51"/>
<rect x="439" y="3" width="1" height="1" fill="#8a8a8a" fill-opacity="0.73"/>
<rect x="193" y="411" width="1" height="1" fill="#707890" fill-opacity="0.58"/>
<rect x="64" y="424" width="1" height="1" fill="#c8c8b0" fill-opacity="0.31"/>
<rect x="88" y="432" width="1" height="1" fill="#909090" fill-opacity="0.62"/>
<rect x="26" y="64" width="1.5" height="1.5" fill="#8a8a8a" fill-opacity="0.39"/>
<rect x="39" y="398" width="1" height="1" fill="#909090" fill-opacity="0.67"/>
<rect x="678" y="414" width="2" height="2" fill="#a0a0a0" fill-opacity="0.77"/>
<rect x="204" y="94" width="1" height="1" fill="#8a8a8a" fill-opacity="0.73"/>
<rect x="753" y="350" width="2" height="2" fill="#a0a0a0" fill-opacity="0.76"/>
<rect x="110" y="368" width="1" height="1" fill="#707890" fill-opacity="0.44"/>
<rect x="350" y="10" width="1" height="1" fill="#b0a070" fill-opacity="0.32"/>
<rect x="628" y="423" width="1" height="1" fill="#a08870" fill-opacity="0.68"/>
<rect x="511" y="14" width="1" height="1" fill="#d8d8d8" fill-opacity="0.50"/>
<rect x="639" y="161" width="1" height="1" fill="#8a8a8a" fill-opacity="0.55"/>
<rect x="591" y="385" width="1" height="1" fill="#b0a070" fill-opacity="0.50"/>
<rect x="621" y="25" width="1" height="1" fill="#909090" fill-opacity="0.34"/>
<rect x="575" y="384" width="1" height="1" fill="#6a7a9a" fill-opacity="0.46"/>
<rect x="688" y="121" width="1" height="1" fill="#c8c8b0" fill-opacity="0.67"/>
<rect x="776" y="108" width="1" height="1" fill="#c8c8b0" fill-opacity="0.72"/>
<rect x="634" y="228" width="2" height="2" fill="#a08870" fill-opacity="0.41"/>
<rect x="270" y="44" width="1.5" height="1.5" fill="#d8d8d8" fill-opacity="0.40"/>
</svg>
<!--/PLANET-->
</div>
<div class="a" style="left:5px;top:667px;width:825px;height:6px;background:#555;border-radius:3px"></div>

<!-- ===== lower-left panel ===== -->
<div class="a" style="left:0;top:675px;width:345px;height:26px;background:#151515"></div>
<div class="a" style="left:0;top:701px;width:345px;height:20px;background:#3c3c3c"></div>
<div class="a" style="left:0;top:721px;width:345px;height:1px;background:#282828"></div>
<div class="a" style="left:0;top:722px;width:345px;height:21px;background:#424242"></div>
<div class="t" style="left:-9px;top:724px;color:#c4c4c4">es</div>
<div class="a" style="left:0;top:743px;width:345px;height:171px;background:#333333"></div>
<div class="a" style="left:0;top:914px;width:345px;height:13px;background:#424242"></div>

<!-- ===== inspector ===== -->
<div class="a" style="left:830px;top:0;width:2px;height:927px;background:#161616"></div>
<div class="a" style="left:832px;top:28px;width:574px;height:899px;background:#3c3c3c" id="insp"></div>
<!--INSP1-->
<div class="a" style="left:832px;top:28px;width:569px;height:899px;background:#383838;"></div>
<div class="a" style="left:1401px;top:28px;width:5px;height:899px;background:#2d2d2d;"></div>
<div class="a" style="left:1403px;top:133px;width:3px;height:794px;background:#5e5e5e;border-radius:2px"></div>
<div class="a" style="left:832px;top:18px;width:569px;height:21px;background:#3e3e3e;"></div>
<div class="a" style="left:832px;top:39px;width:569px;height:1px;background:#1a1a1a;"></div>
<svg class="a" style="left:838px;top:26px" width="9" height="8" viewBox="0 0 9 8"><path d="M0 0 L9 0 L4.5 8Z" fill="#7f7f7f"/></svg>
<svg class="a" style="left:853px;top:21px" width="14" height="14" viewBox="0 0 14 14"><rect x="0.5" y="0.5" width="13" height="13" fill="#2b2421"/><path d="M0.5 0.5H13.5V13.5H0.5Z M0.5 4.8H13.5 M0.5 9.2H13.5 M4.8 0.5V13.5 M9.2 0.5V13.5" stroke="#7fd3ff" stroke-width="1.2" fill="none"/></svg>
<div class="t" style="left:892px;top:21px;color:#d2d2d2;font-weight:bold;font-size:12px">icosphere_high (Mesh Filter)</div>
<svg class="a" style="left:1342px;top:23px" width="12" height="12" viewBox="0 0 12 12"><circle cx="6" cy="6" r="5.2" fill="#c4c4c4"/><path d="M4.2 4.6 Q4.2 2.8 6 2.8 Q7.8 2.8 7.8 4.4 Q7.8 5.4 6.6 5.9 Q6 6.2 6 7" stroke="#3e3e3e" stroke-width="1.5" fill="none"/><rect x="5.2" y="8" width="1.6" height="1.5" fill="#3e3e3e"/></svg>
<svg class="a" style="left:1362px;top:23px" width="12" height="12" viewBox="0 0 12 12"><rect x="0" y="2.5" width="10.5" height="1.3" fill="#c4c4c4"/><rect x="6.5" y="0.5" width="2" height="4.5" fill="#c4c4c4"/><rect x="0" y="7.5" width="10.5" height="1.3" fill="#c4c4c4"/><rect x="3" y="6" width="2" height="4.5" fill="#c4c4c4"/></svg>
<svg class="a" style="left:1386px;top:23px" width="4" height="12" viewBox="0 0 4 12"><rect x="1" y="1.2" width="2" height="2" fill="#c4c4c4"/><rect x="1" y="5" width="2" height="2" fill="#c4c4c4"/><rect x="1" y="8.8" width="2" height="2" fill="#c4c4c4"/></svg>
<div class="t" style="left:851px;top:45px;color:#c4c4c4;">Mesh</div>
<div class="a" style="left:1074px;top:43px;width:323px;height:18px;background:#2a2a2a;border:1px solid #212121;border-radius:3px"></div>
<div class="a" style="left:1378px;top:44px;width:18px;height:16px;background:#303030;border-radius:0 2px 2px 0"></div>
<svg class="a" style="left:1077px;top:46px" width="11" height="11" viewBox="0 0 11 11"><rect x="0" y="0" width="11" height="11" fill="#231c1a"/><path d="M0.5 0.5H10.5V10.5H0.5Z M0.5 3.8H10.5 M0.5 7.2H10.5 M3.8 0.5V10.5 M7.2 0.5V10.5" stroke="#4f94bd" stroke-width="1" fill="none"/></svg>
<div class="t" style="left:1091px;top:45px;color:#d2d2d2;">icosphere_high</div>
<svg class="a" style="left:1381px;top:46px" width="12" height="12" viewBox="0 0 12 12"><circle cx="6" cy="6" r="4.6" stroke="#c4c4c4" stroke-width="1.1" fill="none"/><circle cx="6" cy="6" r="1.7" fill="#c4c4c4"/></svg>
<div class="a" style="left:832px;top:69px;width:569px;height:1px;background:#1a1a1a;"></div>
<div class="a" style="left:832px;top:70px;width:569px;height:21px;background:#3e3e3e;"></div>
<div class="a" style="left:832px;top:91px;width:569px;height:1px;background:#1a1a1a;"></div>
<svg class="a" style="left:839px;top:76px" width="8" height="9" viewBox="0 0 8 9"><path d="M0 0 L8 4.5 L0 9Z" fill="#7f7f7f"/></svg>
<svg class="a" style="left:853px;top:73px" width="14" height="14" viewBox="0 0 14 14"><rect x="0.5" y="0.5" width="13" height="13" fill="#2b2421"/><path d="M0.5 0.5H13.5V13.5H0.5Z M0.5 4.8H13.5 M0.5 9.2H13.5 M4.8 0.5V13.5 M9.2 0.5V13.5" stroke="#7fd3ff" stroke-width="1.2" fill="none"/></svg>
<svg class="a" style="left:857px;top:80px" width="11" height="8" viewBox="0 0 11 8"><path d="M0 4 Q5.5 -1.5 11 4 Q5.5 9.5 0 4Z" fill="#c8c8c8"/><circle cx="5.5" cy="4" r="1.8" fill="#3e3e3e"/></svg>
<svg class="a" style="left:872px;top:73px" width="14" height="14" viewBox="0 0 14 14"><rect x="0.5" y="0.5" width="13" height="13" rx="2" fill="#2a2a2a" stroke="#1f1f1f"/><path d="M3.3 7.3 L5.8 9.8 L10.8 4.3" stroke="#d8d8d8" stroke-width="1.6" fill="none"/></svg>
<div class="t" style="left:892px;top:73px;color:#d2d2d2;font-weight:bold;font-size:12px">Mesh Renderer</div>
<svg class="a" style="left:1342px;top:74px" width="12" height="12" viewBox="0 0 12 12"><circle cx="6" cy="6" r="5.2" fill="#c4c4c4"/><path d="M4.2 4.6 Q4.2 2.8 6 2.8 Q7.8 2.8 7.8 4.4 Q7.8 5.4 6.6 5.9 Q6 6.2 6 7" stroke="#3e3e3e" stroke-width="1.5" fill="none"/><rect x="5.2" y="8" width="1.6" height="1.5" fill="#3e3e3e"/></svg>
<svg class="a" style="left:1362px;top:74px" width="12" height="12" viewBox="0 0 12 12"><rect x="0" y="2.5" width="10.5" height="1.3" fill="#c4c4c4"/><rect x="6.5" y="0.5" width="2" height="4.5" fill="#c4c4c4"/><rect x="0" y="7.5" width="10.5" height="1.3" fill="#c4c4c4"/><rect x="3" y="6" width="2" height="4.5" fill="#c4c4c4"/></svg>
<svg class="a" style="left:1386px;top:74px" width="4" height="12" viewBox="0 0 4 12"><rect x="1" y="1.2" width="2" height="2" fill="#c4c4c4"/><rect x="1" y="5" width="2" height="2" fill="#c4c4c4"/><rect x="1" y="8.8" width="2" height="2" fill="#c4c4c4"/></svg>
<div class="a" style="left:832px;top:92px;width:569px;height:20px;background:#454545;"></div>
<div class="a" style="left:832px;top:112px;width:569px;height:1px;background:#2a2a2a;"></div>
<svg class="a" style="left:838px;top:99px" width="9" height="8" viewBox="0 0 9 8"><path d="M0 0 L9 0 L4.5 8Z" fill="#7f7f7f"/></svg>
<svg class="a" style="left:854px;top:95px" width="12" height="14" viewBox="0 0 12 14"><path d="M1 0H8.5L12 3.5V13Q12 14 11 14H1Q0 14 0 13V1Q0 0 1 0Z" fill="#efefef"/><path d="M4.3 3V11 M7.3 3V11 M2 5.4H10 M2 8.6H10" stroke="#1f6f1f" stroke-width="1.4"/></svg>
<svg class="a" style="left:872px;top:95px" width="14" height="14" viewBox="0 0 14 14"><rect x="0.5" y="0.5" width="13" height="13" rx="2" fill="#2a2a2a" stroke="#1f1f1f"/><path d="M3.3 7.3 L5.8 9.8 L10.8 4.3" stroke="#d8d8d8" stroke-width="1.6" fill="none"/></svg>
<div class="t" style="left:892px;top:95px;color:#d2d2d2;font-weight:bold;font-size:12px">Procedural Gas Giant Flow Simulation (Script)</div>
<svg class="a" style="left:1342px;top:96px" width="12" height="12" viewBox="0 0 12 12"><circle cx="6" cy="6" r="5.2" fill="#c4c4c4"/><path d="M4.2 4.6 Q4.2 2.8 6 2.8 Q7.8 2.8 7.8 4.4 Q7.8 5.4 6.6 5.9 Q6 6.2 6 7" stroke="#3e3e3e" stroke-width="1.5" fill="none"/><rect x="5.2" y="8" width="1.6" height="1.5" fill="#3e3e3e"/></svg>
<svg class="a" style="left:1362px;top:96px" width="12" height="12" viewBox="0 0 12 12"><rect x="0" y="2.5" width="10.5" height="1.3" fill="#c4c4c4"/><rect x="6.5" y="0.5" width="2" height="4.5" fill="#c4c4c4"/><rect x="0" y="7.5" width="10.5" height="1.3" fill="#c4c4c4"/><rect x="3" y="6" width="2" height="4.5" fill="#c4c4c4"/></svg>
<svg class="a" style="left:1386px;top:96px" width="4" height="12" viewBox="0 0 4 12"><rect x="1" y="1.2" width="2" height="2" fill="#c4c4c4"/><rect x="1" y="5" width="2" height="2" fill="#c4c4c4"/><rect x="1" y="8.8" width="2" height="2" fill="#c4c4c4"/></svg>
<div class="t" style="left:851px;top:118px;color:#7f7f7f;">Script</div>
<div class="a" style="left:1074px;top:117px;width:323px;height:17px;background:#2e2e2e;border:1px solid #262626;border-radius:3px"></div>
<svg class="a" style="left:1381px;top:119px" width="12" height="12" viewBox="0 0 12 12"><circle cx="6" cy="6" r="4.6" stroke="#6f6f6f" stroke-width="1.1" fill="none"/><circle cx="6" cy="6" r="1.7" fill="#6f6f6f"/></svg>
<div class="a" style="left:851px;top:137px;width:540px;height:17px;background:#585858;border-radius:3px;border-bottom:1px solid #2a2a2a"></div>
<div class="a" style="left:851px;top:158px;width:540px;height:17px;background:#585858;border-radius:3px;border-bottom:1px solid #2a2a2a"></div>
<div class="a" style="left:851px;top:179px;width:540px;height:17px;background:#585858;border-radius:3px;border-bottom:1px solid #2a2a2a"></div>
<div class="a" style="left:851px;top:200px;width:540px;height:17px;background:#585858;border-radius:3px;border-bottom:1px solid #2a2a2a"></div>
<div class="t" style="left:851px;top:222px;color:#c4c4c4;">Renderer</div>
<div class="a" style="left:1074px;top:220px;width:323px;height:18px;background:#2a2a2a;border:1px solid #212121;border-radius:3px"></div>
<div class="a" style="left:1378px;top:221px;width:18px;height:16px;background:#303030;border-radius:0 2px 2px 0"></div>
<svg class="a" style="left:1381px;top:223px" width="12" height="12" viewBox="0 0 12 12"><circle cx="6" cy="6" r="4.6" stroke="#c4c4c4" stroke-width="1.1" fill="none"/><circle cx="6" cy="6" r="1.7" fill="#c4c4c4"/></svg>
<div class="a" style="left:851px;top:241px;width:540px;height:17px;background:#585858;border-radius:3px;border-bottom:1px solid #2a2a2a"></div>
<div class="t" style="left:851px;top:263px;color:#c4c4c4;">Color Seed</div>
<div class="a" style="left:1074px;top:261px;width:323px;height:18px;background:#2a2a2a;border:1px solid #212121;border-radius:3px"></div>
<div class="a" style="left:851px;top:282px;width:540px;height:17px;background:#585858;border-radius:3px;border-bottom:1px solid #2a2a2a"></div>
<div class="t" style="left:851px;top:304px;color:#c4c4c4;">Features Scale</div>
<div class="a" style="left:1074px;top:302px;width:323px;height:18px;background:#2a2a2a;border:1px solid #212121;border-radius:3px"></div>
<svg class="a" style="left:839px;top:326px" width="8" height="9" viewBox="0 0 8 9"><path d="M0 0 L8 4.5 L0 9Z" fill="#7f7f7f"/></svg>
<div class="t" style="left:851px;top:323px;color:#c4c4c4;">Gradient</div>
<svg class="a" style="left:839px;top:346px" width="8" height="9" viewBox="0 0 8 9"><path d="M0 0 L8 4.5 L0 9Z" fill="#7f7f7f"/></svg>
<div class="t" style="left:851px;top:343px;color:#c4c4c4;">Fresnel</div>
<svg class="a" style="left:838px;top:367px" width="9" height="8" viewBox="0 0 9 8"><path d="M0 0 L9 0 L4.5 8Z" fill="#7f7f7f"/></svg>
<div class="t" style="left:851px;top:363px;color:#c4c4c4;">Curl Flow</div>
<div class="t" style="left:866px;top:384px;color:#c4c4c4;">Custom Render Texture</div>
<div class="a" style="left:1074px;top:382px;width:323px;height:18px;background:#2a2a2a;border:1px solid #212121;border-radius:3px"></div>
<div class="a" style="left:1378px;top:383px;width:18px;height:16px;background:#303030;border-radius:0 2px 2px 0"></div>
<svg class="a" style="left:1381px;top:385px" width="12" height="12" viewBox="0 0 12 12"><circle cx="6" cy="6" r="4.6" stroke="#c4c4c4" stroke-width="1.1" fill="none"/><circle cx="6" cy="6" r="1.7" fill="#c4c4c4"/></svg>
<div class="t" style="left:866px;top:404px;color:#c4c4c4;">Custom Render Texture</div>
<div class="a" style="left:1074px;top:403px;width:323px;height:18px;background:#2a2a2a;border:1px solid #212121;border-radius:3px"></div>
<div class="a" style="left:1378px;top:404px;width:18px;height:16px;background:#303030;border-radius:0 2px 2px 0"></div>
<div class="t" style="right:58px;top:404px;color:#d2d2d2;">Gas Giant Curl Flow (Custom Render Texture)</div>
<svg class="a" style="left:1381px;top:406px" width="12" height="12" viewBox="0 0 12 12"><circle cx="6" cy="6" r="4.6" stroke="#c4c4c4" stroke-width="1.1" fill="none"/><circle cx="6" cy="6" r="1.7" fill="#c4c4c4"/></svg>
<!--/INSP1-->
<!--INSP2-->
<div class="a" style="left:862px;top:420px;width:533px;height:1px;background:#1e1e1e;"></div>
<div class="a" style="left:862px;top:421px;width:533px;height:54px;background:#3c3c3c;"></div>
<div class="a" style="left:862px;top:475px;width:533px;height:1px;background:#1e1e1e;"></div>
<div class="a" style="left:878px;top:427px;width:32px;height:32px;background:linear-gradient(45deg,#c9a27c 0%,#cdbfb4 10%,#d8cfc7 25%,#e2dcd6 36%,#f3f1ee 44%,#fbfbfa 50%,#f8eee2 56%,#f5e4d0 66%,#f3e0ca 100%)"></div>
<svg class="a" style="left:869px;top:460px" width="8" height="9" viewBox="0 0 8 9"><path d="M0 0 L8 4.5 L0 9Z" fill="#7a7a7a"/></svg>
<div class="t" style="left:918px;top:426px;color:#959595;font-size:13.6px;line-height:18px;height:18px">Gas Giant Curl Flow (Custom Render Texture) (Material)</div>
<svg class="a" style="left:1349px;top:428px" width="12" height="12" viewBox="0 0 12 12"><circle cx="6" cy="6" r="5.2" fill="#c4c4c4"/><path d="M4.2 4.6 Q4.2 2.8 6 2.8 Q7.8 2.8 7.8 4.4 Q7.8 5.4 6.6 5.9 Q6 6.2 6 7" stroke="#3e3e3e" stroke-width="1.5" fill="none"/><rect x="5.2" y="8" width="1.6" height="1.5" fill="#3e3e3e"/></svg>
<svg class="a" style="left:1365px;top:428px" width="12" height="12" viewBox="0 0 12 12"><rect x="0" y="2.5" width="10.5" height="1.3" fill="#c4c4c4"/><rect x="6.5" y="0.5" width="2" height="4.5" fill="#c4c4c4"/><rect x="0" y="7.5" width="10.5" height="1.3" fill="#c4c4c4"/><rect x="3" y="6" width="2" height="4.5" fill="#c4c4c4"/></svg>
<svg class="a" style="left:1386px;top:428px" width="4" height="12" viewBox="0 0 4 12"><rect x="1" y="1.2" width="2" height="2" fill="#c4c4c4"/><rect x="1" y="5" width="2" height="2" fill="#c4c4c4"/><rect x="1" y="8.8" width="2" height="2" fill="#c4c4c4"/></svg>
<div class="t" style="left:915px;top:451px;color:#c4c4c4;">Shader</div>
<div class="a" style="left:967px;top:450px;width:327px;height:17px;background:#515151;border-radius:3px;border-bottom:1px solid #262626"></div>
<div class="t" style="left:970px;top:451px;width:307px;overflow:hidden;color:#d8d8d8">Parallel Cascades/Gas Giants/Gas Giant Flow Simulation</div>
<svg class="a" style="left:1279px;top:456px" width="9" height="6" viewBox="0 0 9 6"><path d="M0 0 L9 0 L4.5 5.5Z" fill="#c4c4c4"/></svg>
<div class="a" style="left:1299px;top:450px;width:44px;height:17px;background:#515151;border-radius:3px;border-bottom:1px solid #262626"></div>
<div class="t" style="left:1305px;top:451px;color:#d8d8d8;">Edit...</div>
<div class="a" style="left:1348px;top:450px;width:42px;height:17px;background:#515151;border-radius:3px;border-bottom:1px solid #262626"></div>
<svg class="a" style="left:1356px;top:454px" width="12" height="10" viewBox="0 0 12 10"><rect x="0" y="0" width="2" height="1.5" fill="#c4c4c4"/><rect x="3" y="0.5" width="9" height="1.3" fill="#c4c4c4"/><rect x="3" y="4" width="9" height="1.3" fill="#c4c4c4"/><rect x="3" y="7.5" width="9" height="1.3" fill="#c4c4c4"/><rect x="1.3" y="1.5" width="1" height="7" fill="#c4c4c4"/></svg>
<svg class="a" style="left:1377px;top:456px" width="9" height="6" viewBox="0 0 9 6"><path d="M0 0 L9 0 L4.5 5.5Z" fill="#c4c4c4"/></svg>
<div class="t" style="left:866px;top:492px;color:#d2d2d2;font-weight:bold;font-size:12px">Randomization Curves</div>
<div class="t" style="left:866px;top:510px;color:#c4c4c4;">Whorl Flow Speed Curve</div>
<svg class="a" style="left:1074px;top:509px" width="323" height="16" viewBox="0 0 323 16"><rect x="0.5" y="0.5" width="322" height="15" rx="1.5" fill="#5a5a5a" stroke="#2b2b2b"/><path d="M1 14.2 C120 14 170 1.5 322 1.5" stroke="#17f217" stroke-width="1.6" fill="none" transform="translate(0.5,0)"/></svg>
<div class="t" style="left:866px;top:529px;color:#c4c4c4;">Turbulence Flow Speed Curve</div>
<svg class="a" style="left:1074px;top:528px" width="323" height="16" viewBox="0 0 323 16"><rect x="0.5" y="0.5" width="322" height="15" rx="1.5" fill="#5a5a5a" stroke="#2b2b2b"/><path d="M1 14.2 C100 11 220 3 322 1.5" stroke="#17f217" stroke-width="1.6" fill="none" transform="translate(0.5,0)"/></svg>
<div class="t" style="left:866px;top:548px;color:#c4c4c4;">Band Flow Speed Curve</div>
<svg class="a" style="left:1074px;top:547px" width="323" height="16" viewBox="0 0 323 16"><rect x="0.5" y="0.5" width="322" height="15" rx="1.5" fill="#5a5a5a" stroke="#2b2b2b"/><path d="M1 14.2 C130 14 190 1.5 322 1.5" stroke="#17f217" stroke-width="1.6" fill="none" transform="translate(0.5,0)"/></svg>
<div class="t" style="left:866px;top:567px;color:#c4c4c4;">Turbulence Scale Curve</div>
<svg class="a" style="left:1074px;top:566px" width="323" height="16" viewBox="0 0 323 16"><rect x="0.5" y="0.5" width="322" height="15" rx="1.5" fill="#5a5a5a" stroke="#2b2b2b"/><path d="M1 14.2 C120 14 190 1.5 322 1.5" stroke="#17f217" stroke-width="1.6" fill="none" transform="translate(0.5,0)"/></svg>
<div class="t" style="left:866px;top:586px;color:#c4c4c4;">Bands Scale Curve</div>
<svg class="a" style="left:1074px;top:585px" width="323" height="16" viewBox="0 0 323 16"><rect x="0.5" y="0.5" width="322" height="15" rx="1.5" fill="#5a5a5a" stroke="#2b2b2b"/><path d="M1 14.2 C130 14 200 1.5 322 1.5" stroke="#17f217" stroke-width="1.6" fill="none" transform="translate(0.5,0)"/></svg>
<div class="t" style="left:866px;top:605px;color:#c4c4c4;">Whorl Density Curve</div>
<svg class="a" style="left:1074px;top:604px" width="323" height="16" viewBox="0 0 323 16"><rect x="0.5" y="0.5" width="322" height="15" rx="1.5" fill="#5a5a5a" stroke="#2b2b2b"/><path d="M1 14.2 C60 13 200 1.5 322 1.5" stroke="#17f217" stroke-width="1.6" fill="none" transform="translate(0.5,0)"/></svg>
<div class="t" style="left:866px;top:624px;color:#c4c4c4;">Source Color Cell Scale Curve</div>
<svg class="a" style="left:1074px;top:623px" width="323" height="16" viewBox="0 0 323 16"><rect x="0.5" y="0.5" width="322" height="15" rx="1.5" fill="#5a5a5a" stroke="#2b2b2b"/><path d="M1 14.2 C150 14 240 12 322 1.5" stroke="#17f217" stroke-width="1.6" fill="none" transform="translate(0.5,0)"/></svg>
<div class="t" style="left:866px;top:643px;color:#c4c4c4;">Randomize Initializaton Steps</div>
<div class="a" style="left:1074px;top:641px;width:323px;height:18px;background:#2a2a2a;border:1px solid #212121;border-radius:3px"></div>
<div class="t" style="left:1079px;top:643px;color:#d2d2d2;">60</div>
<div class="t" style="left:866px;top:663px;color:#c4c4c4;">Randomize Initialization Flow Speed</div>
<div class="a" style="left:1074px;top:661px;width:323px;height:18px;background:#2a2a2a;border:1px solid #212121;border-radius:3px"></div>
<div class="t" style="left:1079px;top:663px;color:#d2d2d2;">0.0005</div>
<div class="t" style="left:851px;top:693px;color:#d2d2d2;font-weight:bold;font-size:12px">Simulation Settings</div>
<div class="a" style="left:851px;top:710px;width:540px;height:17px;background:#585858;border-radius:3px;border-bottom:1px solid #2a2a2a"></div>
<div class="t" style="left:851px;top:711px;width:540px;text-align:center;color:#d8d8d8">Restart Simulation</div>
<div class="t" style="left:851px;top:732px;color:#c4c4c4;">Editor Simulation Steps</div>
<div class="a" style="left:1074px;top:730px;width:323px;height:18px;background:#2a2a2a;border:1px solid #212121;border-radius:3px"></div>
<div class="t" style="left:1079px;top:732px;color:#d2d2d2;">450</div>
<div class="t" style="left:851px;top:752px;color:#c4c4c4;">Editor Simulation Flow Speed</div>
<div class="a" style="left:1074px;top:750px;width:323px;height:18px;background:#2a2a2a;border:1px solid #212121;border-radius:3px"></div>
<div class="t" style="left:1079px;top:752px;color:#d2d2d2;">0.0002</div>
<div class="t" style="left:851px;top:772px;color:#c4c4c4;">Distance To Camera For Simulation</div>
<div class="a" style="left:1074px;top:770px;width:323px;height:18px;background:#2a2a2a;border:1px solid #212121;border-radius:3px"></div>
<div class="t" style="left:1079px;top:772px;color:#d2d2d2;">10</div>
<div class="t" style="left:851px;top:790px;color:#c4c4c4;">Initialize On Reload</div>
<svg class="a" style="left:1074px;top:791px" width="14" height="14" viewBox="0 0 14 14"><rect x="0.5" y="0.5" width="13" height="13" rx="2" fill="#2a2a2a" stroke="#1f1f1f"/><path d="M3.3 7.3 L5.8 9.8 L10.8 4.3" stroke="#d8d8d8" stroke-width="1.6" fill="none"/></svg>
<div class="a" style="left:832px;top:814px;width:569px;height:1px;background:#1e1e1e;"></div>
<div class="a" style="left:832px;top:815px;width:569px;height:53px;background:#3c3c3c;"></div>
<div class="a" style="left:832px;top:868px;width:569px;height:1px;background:#1e1e1e;"></div>
<div class="a" style="left:848px;top:821px;width:32px;height:32px;background:#4a4a4a"></div>
<div class="a" style="left:850px;top:822px;width:29px;height:29px;border-radius:50%;background:radial-gradient(circle 21px at 36% 36%,#efe6da 0%,#e2d2bc 40%,#c8a882 62%,#6a4a30 76%,#050403 86%)"></div>
<div class="a" style="left:850px;top:822px;width:29px;height:29px;border-radius:50%;background:repeating-linear-gradient(176deg,rgba(200,120,50,0) 0px,rgba(200,120,50,0) 2px,rgba(200,120,50,.4) 3.5px,rgba(200,120,50,0) 5px);-webkit-mask:radial-gradient(circle 21px at 36% 36%,#000 50%,transparent 75%)"></div>
<svg class="a" style="left:839px;top:855px" width="9" height="8" viewBox="0 0 9 8"><path d="M0 0 L9 0 L4.5 8Z" fill="#7a7a7a"/></svg>
<div class="t" style="left:888px;top:820px;color:#a8a8a8;font-size:13.6px;line-height:18px;height:18px">Gas Giant from Cubemap (Instance) (Material)</div>
<svg class="a" style="left:1355px;top:822px" width="12" height="12" viewBox="0 0 12 12"><circle cx="6" cy="6" r="5.2" fill="#c4c4c4"/><path d="M4.2 4.6 Q4.2 2.8 6 2.8 Q7.8 2.8 7.8 4.4 Q7.8 5.4 6.6 5.9 Q6 6.2 6 7" stroke="#3e3e3e" stroke-width="1.5" fill="none"/><rect x="5.2" y="8" width="1.6" height="1.5" fill="#3e3e3e"/></svg>
<svg class="a" style="left:1371px;top:822px" width="12" height="12" viewBox="0 0 12 12"><rect x="0" y="2.5" width="10.5" height="1.3" fill="#c4c4c4"/><rect x="6.5" y="0.5" width="2" height="4.5" fill="#c4c4c4"/><rect x="0" y="7.5" width="10.5" height="1.3" fill="#c4c4c4"/><rect x="3" y="6" width="2" height="4.5" fill="#c4c4c4"/></svg>
<svg class="a" style="left:1391px;top:822px" width="4" height="12" viewBox="0 0 4 12"><rect x="1" y="1.2" width="2" height="2" fill="#c4c4c4"/><rect x="1" y="5" width="2" height="2" fill="#c4c4c4"/><rect x="1" y="8.8" width="2" height="2" fill="#c4c4c4"/></svg>
<div class="t" style="left:885px;top:845px;color:#c4c4c4;">Shader</div>
<div class="a" style="left:937px;top:844px;width:363px;height:17px;background:#515151;border-radius:3px;border-bottom:1px solid #262626"></div>
<div class="t" style="left:941px;top:845px;color:#d8d8d8;">Parallel Cascades/Gas Giants/Gas Giant from Cubemap</div>
<svg class="a" style="left:1286px;top:850px" width="9" height="6" viewBox="0 0 9 6"><path d="M0 0 L9 0 L4.5 5.5Z" fill="#c4c4c4"/></svg>
<div class="a" style="left:1305px;top:844px;width:44px;height:17px;background:#515151;border-radius:3px;border-bottom:1px solid #262626"></div>
<div class="t" style="left:1311px;top:845px;color:#d8d8d8;">Edit...</div>
<div class="a" style="left:1354px;top:844px;width:42px;height:17px;background:#515151;border-radius:3px;border-bottom:1px solid #262626"></div>
<svg class="a" style="left:1362px;top:848px" width="12" height="10" viewBox="0 0 12 10"><rect x="0" y="0" width="2" height="1.5" fill="#c4c4c4"/><rect x="3" y="0.5" width="9" height="1.3" fill="#c4c4c4"/><rect x="3" y="4" width="9" height="1.3" fill="#c4c4c4"/><rect x="3" y="7.5" width="9" height="1.3" fill="#c4c4c4"/><rect x="1.3" y="1.5" width="1" height="7" fill="#c4c4c4"/></svg>
<svg class="a" style="left:1384px;top:850px" width="9" height="6" viewBox="0 0 9 6"><path d="M0 0 L9 0 L4.5 5.5Z" fill="#c4c4c4"/></svg>
<div class="a" style="left:832px;top:869px;width:569px;height:8px;background:#383838;"></div>
<div class="a" style="left:832px;top:877px;width:569px;height:1px;background:#1e1e1e;"></div>
<div class="a" style="left:832px;top:878px;width:569px;height:17px;background:#353535;"></div>
<svg class="a" style="left:851px;top:882px" width="9" height="8" viewBox="0 0 9 8"><path d="M0 0 L9 0 L4.5 8Z" fill="#808080"/></svg>
<div class="t" style="left:865px;top:879px;color:#d2d2d2;font-weight:bold;font-size:12px">Surface Options</div>
<div class="a" style="left:832px;top:895px;width:569px;height:13px;background:#383838;"></div>
<div class="a" style="left:832px;top:908px;width:569px;height:1px;background:#1e1e1e;"></div>
<div class="a" style="left:832px;top:909px;width:569px;height:5px;background:#353535;"></div>
<svg class="a" style="left:851px;top:912px" width="9" height="8" viewBox="0 0 9 8"><path d="M0 0 L9 0 L4.5 8Z" fill="#808080"/></svg>
<div class="t" style="left:865px;top:910px;color:#d2d2d2;font-weight:bold;font-size:12px">Surface Inputs</div>
<div class="a" style="left:832px;top:914px;width:574px;height:13px;background:#3c3c3c;"></div>
<div class="t" style="left:836px;top:915px;color:#d8d8d8;font-size:13px">Gas Giant from Cubemap (Instance)</div>
<div class="a" style="left:1049px;top:922px;width:257px;height:1px;background:#555"></div>
<div class="a" style="left:1049px;top:925px;width:257px;height:1px;background:#555"></div>
<div class="a" style="left:1306px;top:914px;width:100px;height:13px;background:#3c3c3c"></div>
<div class="a" style="left:1306px;top:915px;width:1px;height:12px;background:#262626"></div>
<div class="a" style="left:1326px;top:915px;width:1px;height:12px;background:#262626"></div>
<div class="a" style="left:1346px;top:915px;width:1px;height:12px;background:#262626"></div>
<div class="a" style="left:1366px;top:915px;width:1px;height:12px;background:#262626"></div>
<div class="a" style="left:1395px;top:915px;width:1px;height:12px;background:#262626"></div>
<svg class="a" style="left:1313px;top:919px" width="8" height="8" viewBox="0 0 8 8"><path d="M0 0L8 5L0 10Z" fill="#c4c4c4"/></svg>
<svg class="a" style="left:1331px;top:918px" width="12" height="9" viewBox="0 0 12 9"><path d="M0 6Q0 0 6 0Q12 0 12 6Z" fill="#c8c8c8"/><path d="M0 6Q6 8.5 12 6" stroke="#333" stroke-width="1.2" fill="none"/><rect x="0" y="7" width="12" height="2" fill="#c8c8c8"/></svg>
<div class="a" style="left:1351px;top:920px;width:5px;height:5px;border-radius:50%;background:#f5c000"></div>
<div class="a" style="left:1358px;top:917px;width:4px;height:4px;border-radius:50%;background:#f5c000"></div>
<svg class="a" style="left:1369px;top:918px" width="12" height="9" viewBox="0 0 12 9"><path d="M0 5Q0 0 6 0Q12 0 12 5Z" fill="#7fd3ff"/><rect x="1" y="5" width="10" height="4" fill="#c8c8c8"/></svg>
<svg class="a" style="left:1385px;top:921px" width="8" height="5" viewBox="0 0 8 5"><path d="M0 0H8L4 5Z" fill="#c8c8c8"/></svg>
<div class="a" style="left:1403px;top:921px;width:2px;height:2px;background:#c8c8c8"></div>
<div class="a" style="left:1403px;top:925px;width:2px;height:2px;background:#c8c8c8"></div>
<!--/INSP2-->
<div class="a" style="left:832px;top:0;width:574px;height:28px;background:#141414"></div>
<div class="a" style="left:832px;top:4px;width:95px;height:24px;background:#3c3c3c;border-radius:4px 4px 0 0;border-top:2px solid #3a79bb"></div>
<div class="t" style="left:858px;top:9px;color:#c4c4c4">Inspector</div>
<svg class="a" style="left:843px;top:12px" width="11" height="11" viewBox="0 0 11 11"><circle cx="5.5" cy="5.5" r="5.2" fill="#c8c8c8"/><rect x="4.7" y="2" width="1.7" height="1.6" fill="#3c3c3c"/><path d="M3.8 4.6H6.4V8.3H7.2V9.2H3.8V8.3H4.7V5.5H3.8Z" fill="#3c3c3c"/></svg>
<svg class="a" style="left:1378px;top:11px" width="11" height="11" viewBox="0 0 11 11"><path d="M2.5 5V3.2Q2.5 0.8 5 0.8Q7.5 0.8 7.5 3" stroke="#d8d8d8" stroke-width="1.1" fill="none"/><rect x="1" y="5" width="9" height="5.5" fill="none" stroke="#d8d8d8" stroke-width="1.1"/></svg>
<svg class="a" style="left:1397px;top:10px" width="4" height="12" viewBox="0 0 4 12"><rect x="1" y="1.2" width="2" height="2" fill="#d8d8d8"/><rect x="1" y="5" width="2" height="2" fill="#d8d8d8"/><rect x="1" y="8.8" width="2" height="2" fill="#d8d8d8"/></svg>

<!-- ===== bake dialog ===== -->
<!--DLG-->
<div class="a" style="left:344px;top:432px;width:491px;height:495px;background:#3c3c3c;border-radius:5px 5px 0 0;border:1px solid #4e4e4e;border-bottom:none"></div>
<div class="a" style="left:345px;top:433px;width:489px;height:30px;background:#282828;border-radius:4px 4px 0 0"></div>
<div class="t" style="left:353px;top:440px;color:#d4d4d4;font-size:11.7px">Bake Texture From Material</div>
<div class="a" style="left:814px;top:440px;width:19px;height:19px;background:#242424"></div>
<div class="t" style="left:820px;top:440px;color:#c0c0c0;font-size:11.5px">x</div>
<div class="a" style="left:345px;top:485px;width:489px;height:1px;background:#1a1a1a"></div>
<div class="a" style="left:345px;top:486px;width:1px;height:384px;background:#1e1e1e"></div>
<div class="a" style="left:346px;top:486px;width:488px;height:384px;background:#3e3e3e"></div>
<div class="a" style="left:345px;top:870px;width:489px;height:1px;background:#1a1a1a"></div>
<div class="t" style="left:349px;top:489px;color:#c4c4c4;font-weight:bold;font-size:12px">Preview:</div>
<div class="a" style="left:821px;top:486px;width:1px;height:384px;background:#343434"></div>
<svg class="a" style="left:824px;top:490px" width="9" height="6" viewBox="0 0 9 6"><path d="M0 5.5L9 5.5L4.5 0Z" fill="#d0d0d0"/></svg>
<div class="a" style="left:823px;top:501px;width:10px;height:284px;background:#5c5c5c;border-radius:5px"></div>
<svg class="a" style="left:824px;top:859px" width="9" height="6" viewBox="0 0 9 6"><path d="M0 0L9 0L4.5 5.5Z" fill="#d0d0d0"/></svg>
<div class="a" style="left:383px;top:507px;width:400px;height:363px;background:#cccccc;overflow:hidden">
<svg width="400" height="400" viewBox="0 0 400 400" style="display:block">
<defs>
<filter id="tex" x="-0.15" y="-0.15" width="1.3" height="1.3"><feTurbulence type="fractalNoise" baseFrequency="0.01 0.05" numOctaves="3" seed="5" result="n0"/><feTurbulence type="fractalNoise" baseFrequency="0.03 0.03" numOctaves="2" seed="8" result="d"/><feDisplacementMap in="n0" in2="d" scale="22" xChannelSelector="R" yChannelSelector="G" result="n"/><feColorMatrix in="n" type="matrix" values="0 0 0 0 0  0 0 0 0 0  0 0 0 0 0  5 0 0 0 -2.8" result="a1"/><feFlood flood-color="#9a928e" result="c1"/><feComposite in="c1" in2="a1" operator="in" result="s1"/><feColorMatrix in="n" type="matrix" values="0 0 0 0 0  0 0 0 0 0  0 0 0 0 0  0 4 0 0 -1.95" result="a3"/><feFlood flood-color="#e6a47c" result="c3"/><feComposite in="c3" in2="a3" operator="in" result="s3"/><feColorMatrix in="n" type="matrix" values="0 0 0 0 0  0 0 0 0 0  0 0 0 0 0  0 0 4 0 -1.8" result="a4"/><feFlood flood-color="#eac89a" result="c4"/><feComposite in="c4" in2="a4" operator="in" result="s4"/><feColorMatrix in="n" type="matrix" values="0 0 0 0 0  0 0 0 0 0  0 0 0 0 0  -4 0 0 0 1.5" result="a2"/><feFlood flood-color="#fbf8f4" result="c2"/><feComposite in="c2" in2="a2" operator="in" result="s2"/><feFlood flood-color="#f2e4d6" result="bg"/><feMerge><feMergeNode in="bg"/><feMergeNode in="s4"/><feMergeNode in="s3"/><feMergeNode in="s2"/><feMergeNode in="s1"/></feMerge><feComposite in2="SourceGraphic" operator="in"/></filter>
<filter id="tex2" x="-0.15" y="-0.15" width="1.3" height="1.3"><feTurbulence type="fractalNoise" baseFrequency="0.04 0.04" numOctaves="3" seed="11" result="n0"/><feTurbulence type="fractalNoise" baseFrequency="0.03 0.03" numOctaves="2" seed="14" result="d"/><feDisplacementMap in="n0" in2="d" scale="22" xChannelSelector="R" yChannelSelector="G" result="n"/><feColorMatrix in="n" type="matrix" values="0 0 0 0 0  0 0 0 0 0  0 0 0 0 0  5 0 0 0 -2.8" result="a1"/><feFlood flood-color="#9a928e" result="c1"/><feComposite in="c1" in2="a1" operator="in" result="s1"/><feColorMatrix in="n" type="matrix" values="0 0 0 0 0  0 0 0 0 0  0 0 0 0 0  0 4 0 0 -1.95" result="a3"/><feFlood flood-color="#e6a47c" result="c3"/><feComposite in="c3" in2="a3" operator="in" result="s3"/><feColorMatrix in="n" type="matrix" values="0 0 0 0 0  0 0 0 0 0  0 0 0 0 0  0 0 4 0 -1.8" result="a4"/><feFlood flood-color="#eac89a" result="c4"/><feComposite in="c4" in2="a4" operator="in" result="s4"/><feColorMatrix in="n" type="matrix" values="0 0 0 0 0  0 0 0 0 0  0 0 0 0 0  -4 0 0 0 1.5" result="a2"/><feFlood flood-color="#fbf8f4" result="c2"/><feComposite in="c2" in2="a2" operator="in" result="s2"/><feFlood flood-color="#f2e4d6" result="bg"/><feMerge><feMergeNode in="bg"/><feMergeNode in="s4"/><feMergeNode in="s3"/><feMergeNode in="s2"/><feMergeNode in="s1"/></feMerge><feComposite in2="SourceGraphic" operator="in"/></filter>
</defs>
<rect x="0" y="133" width="400" height="134" filter="url(#tex)"/>
<rect x="100" y="0" width="100" height="133" filter="url(#tex2)"/>
<rect x="100" y="267" width="100" height="133" filter="url(#tex2)"/>
<filter id="swd" x="-0.2" y="-0.2" width="1.4" height="1.4"><feTurbulence type="fractalNoise" baseFrequency="0.09" numOctaves="2" seed="4" result="t"/><feDisplacementMap in="SourceGraphic" in2="t" scale="9" xChannelSelector="R" yChannelSelector="G" result="d"/><feGaussianBlur in="d" stdDeviation="0.8"/></filter>
<clipPath id="fc1"><rect x="100" y="0" width="100" height="133"/></clipPath><clipPath id="fc2"><rect x="100" y="267" width="100" height="133"/></clipPath>
<g clip-path="url(#fc1)"><g filter="url(#swd)">
<ellipse cx="149.4" cy="62" rx="5.7" ry="6.3" fill="none" stroke="#9a928e" stroke-opacity="0.39" stroke-width="2.3" stroke-dasharray="29 7"/>
<ellipse cx="150.4" cy="62" rx="10.4" ry="11.6" fill="none" stroke="#f8f4ef" stroke-opacity="0.59" stroke-width="3.2" stroke-dasharray="13 9"/>
<ellipse cx="150.9" cy="62" rx="15.2" ry="16.8" fill="none" stroke="#f8f4ef" stroke-opacity="0.51" stroke-width="4.0" stroke-dasharray="19 10"/>
<ellipse cx="148.1" cy="62" rx="19.9" ry="22.1" fill="none" stroke="#b8aaa0" stroke-opacity="0.46" stroke-width="2.1" stroke-dasharray="22 8"/>
<ellipse cx="151.5" cy="62" rx="24.7" ry="27.3" fill="none" stroke="#eac89a" stroke-opacity="0.52" stroke-width="2.3" stroke-dasharray="13 6"/>
<ellipse cx="149.3" cy="62" rx="29.4" ry="32.6" fill="none" stroke="#e6a47c" stroke-opacity="0.36" stroke-width="2.3" stroke-dasharray="24 8"/>
<ellipse cx="148.7" cy="62" rx="34.2" ry="37.8" fill="none" stroke="#b8aaa0" stroke-opacity="0.62" stroke-width="3.8" stroke-dasharray="21 8"/>
<ellipse cx="151.9" cy="62" rx="38.9" ry="43.1" fill="none" stroke="#b8aaa0" stroke-opacity="0.49" stroke-width="3.9" stroke-dasharray="13 9"/>
<ellipse cx="150.6" cy="62" rx="43.7" ry="48.3" fill="none" stroke="#f8f4ef" stroke-opacity="0.65" stroke-width="2.5" stroke-dasharray="16 10"/>
<ellipse cx="151.2" cy="62" rx="48.4" ry="53.6" fill="none" stroke="#b8aaa0" stroke-opacity="0.56" stroke-width="3.3" stroke-dasharray="22 10"/>
<ellipse cx="151.7" cy="62" rx="53.2" ry="58.8" fill="none" stroke="#f8f4ef" stroke-opacity="0.58" stroke-width="3.4" stroke-dasharray="23 6"/>
<ellipse cx="151.3" cy="62" rx="57.9" ry="64.0" fill="none" stroke="#f8f4ef" stroke-opacity="0.68" stroke-width="3.8" stroke-dasharray="27 7"/>
<ellipse cx="151.8" cy="62" rx="62.7" ry="69.3" fill="none" stroke="#eac89a" stroke-opacity="0.47" stroke-width="3.4" stroke-dasharray="24 9"/>
<ellipse cx="150.0" cy="62" rx="67.5" ry="74.5" fill="none" stroke="#f8f4ef" stroke-opacity="0.64" stroke-width="2.7" stroke-dasharray="29 4"/>
<ellipse cx="151.6" cy="62" rx="72.2" ry="79.8" fill="none" stroke="#f8f4ef" stroke-opacity="0.64" stroke-width="2.4" stroke-dasharray="11 3"/>
</g></g>
<g clip-path="url(#fc2)"><g filter="url(#swd)">
<ellipse cx="149.1" cy="325" rx="5.7" ry="6.3" fill="none" stroke="#b8aaa0" stroke-opacity="0.61" stroke-width="2.5" stroke-dasharray="11 5"/>
<ellipse cx="148.8" cy="325" rx="10.4" ry="11.6" fill="none" stroke="#f8f4ef" stroke-opacity="0.45" stroke-width="3.8" stroke-dasharray="21 3"/>
<ellipse cx="148.7" cy="325" rx="15.2" ry="16.8" fill="none" stroke="#9a928e" stroke-opacity="0.49" stroke-width="3.3" stroke-dasharray="10 4"/>
<ellipse cx="150.9" cy="325" rx="19.9" ry="22.1" fill="none" stroke="#9a928e" stroke-opacity="0.36" stroke-width="2.0" stroke-dasharray="16 5"/>
<ellipse cx="150.1" cy="325" rx="24.7" ry="27.3" fill="none" stroke="#e6a47c" stroke-opacity="0.64" stroke-width="2.0" stroke-dasharray="26 3"/>
<ellipse cx="148.1" cy="325" rx="29.4" ry="32.6" fill="none" stroke="#e6a47c" stroke-opacity="0.41" stroke-width="2.7" stroke-dasharray="27 4"/>
<ellipse cx="148.1" cy="325" rx="34.2" ry="37.8" fill="none" stroke="#f8f4ef" stroke-opacity="0.48" stroke-width="2.9" stroke-dasharray="27 3"/>
<ellipse cx="151.4" cy="325" rx="38.9" ry="43.1" fill="none" stroke="#f8f4ef" stroke-opacity="0.65" stroke-width="3.4" stroke-dasharray="23 6"/>
<ellipse cx="149.3" cy="325" rx="43.7" ry="48.3" fill="none" stroke="#9a928e" stroke-opacity="0.61" stroke-width="2.2" stroke-dasharray="22 5"/>
<ellipse cx="149.6" cy="325" rx="48.4" ry="53.6" fill="none" stroke="#b8aaa0" stroke-opacity="0.58" stroke-width="3.0" stroke-dasharray="12 8"/>
<ellipse cx="151.9" cy="325" rx="53.2" ry="58.8" fill="none" stroke="#f8f4ef" stroke-opacity="0.45" stroke-width="3.3" stroke-dasharray="30 5"/>
<ellipse cx="148.1" cy="325" rx="57.9" ry="64.0" fill="none" stroke="#f8f4ef" stroke-opacity="0.37" stroke-width="2.3" stroke-dasharray="11 10"/>
<ellipse cx="151.7" cy="325" rx="62.7" ry="69.3" fill="none" stroke="#f8f4ef" stroke-opacity="0.44" stroke-width="3.4" stroke-dasharray="9 6"/>
<ellipse cx="148.3" cy="325" rx="67.5" ry="74.5" fill="none" stroke="#e6a47c" stroke-opacity="0.64" stroke-width="2.2" stroke-dasharray="15 8"/>
<ellipse cx="149.1" cy="325" rx="72.2" ry="79.8" fill="none" stroke="#f8f4ef" stroke-opacity="0.62" stroke-width="3.5" stroke-dasharray="12 3"/>
</g></g>
</svg></div>
<div class="a" style="left:732px;top:907px;width:98px;height:17px;background:#585858;border-radius:3px;border-bottom:1px solid #262626"></div>
<div class="t" style="left:732px;top:908px;width:98px;text-align:center;color:#e0e0e0">Bake Texture</div>
<!--/DLG-->

<!-- ===== context menu ===== -->
<div class="menu" style="left:910px;top:102px;width:417px;height:328px">
<div class="a" style="left:6px;top:303px;width:405px;height:21px;background:#efefef;border-radius:4px"></div>
<div class="msep" style="top:29px"></div>
<div class="msep" style="top:214px"></div>
<div class="msep" style="top:245px"></div>
<div class="msep" style="top:298px"></div>
<div class="mi" style="top:6px">Reset</div>
<div class="mi dis" style="top:37px">Move to Front</div>
<div class="mi dis" style="top:59px">Move to Back</div>
<div class="mi" style="top:81px">Remove Component</div>
<div class="mi" style="top:103px">Move Up</div>
<div class="mi dis" style="top:125px">Move Down</div>
<div class="mi" style="top:147px">Copy Component</div>
<div class="mi dis" style="top:169px">Paste Component As New</div>
<div class="mi dis" style="top:191px">Paste Component Values</div>
<div class="mi" style="top:222px">Find References In Scene</div>
<div class="mi" style="top:253px">Properties...</div>
<div class="mi" style="top:275px">Edit Script</div>
<div class="mi" style="top:306px">Bake and Assign Initialisation Cubemap from current Texture</div>
</div>

</div>
</body></html>
